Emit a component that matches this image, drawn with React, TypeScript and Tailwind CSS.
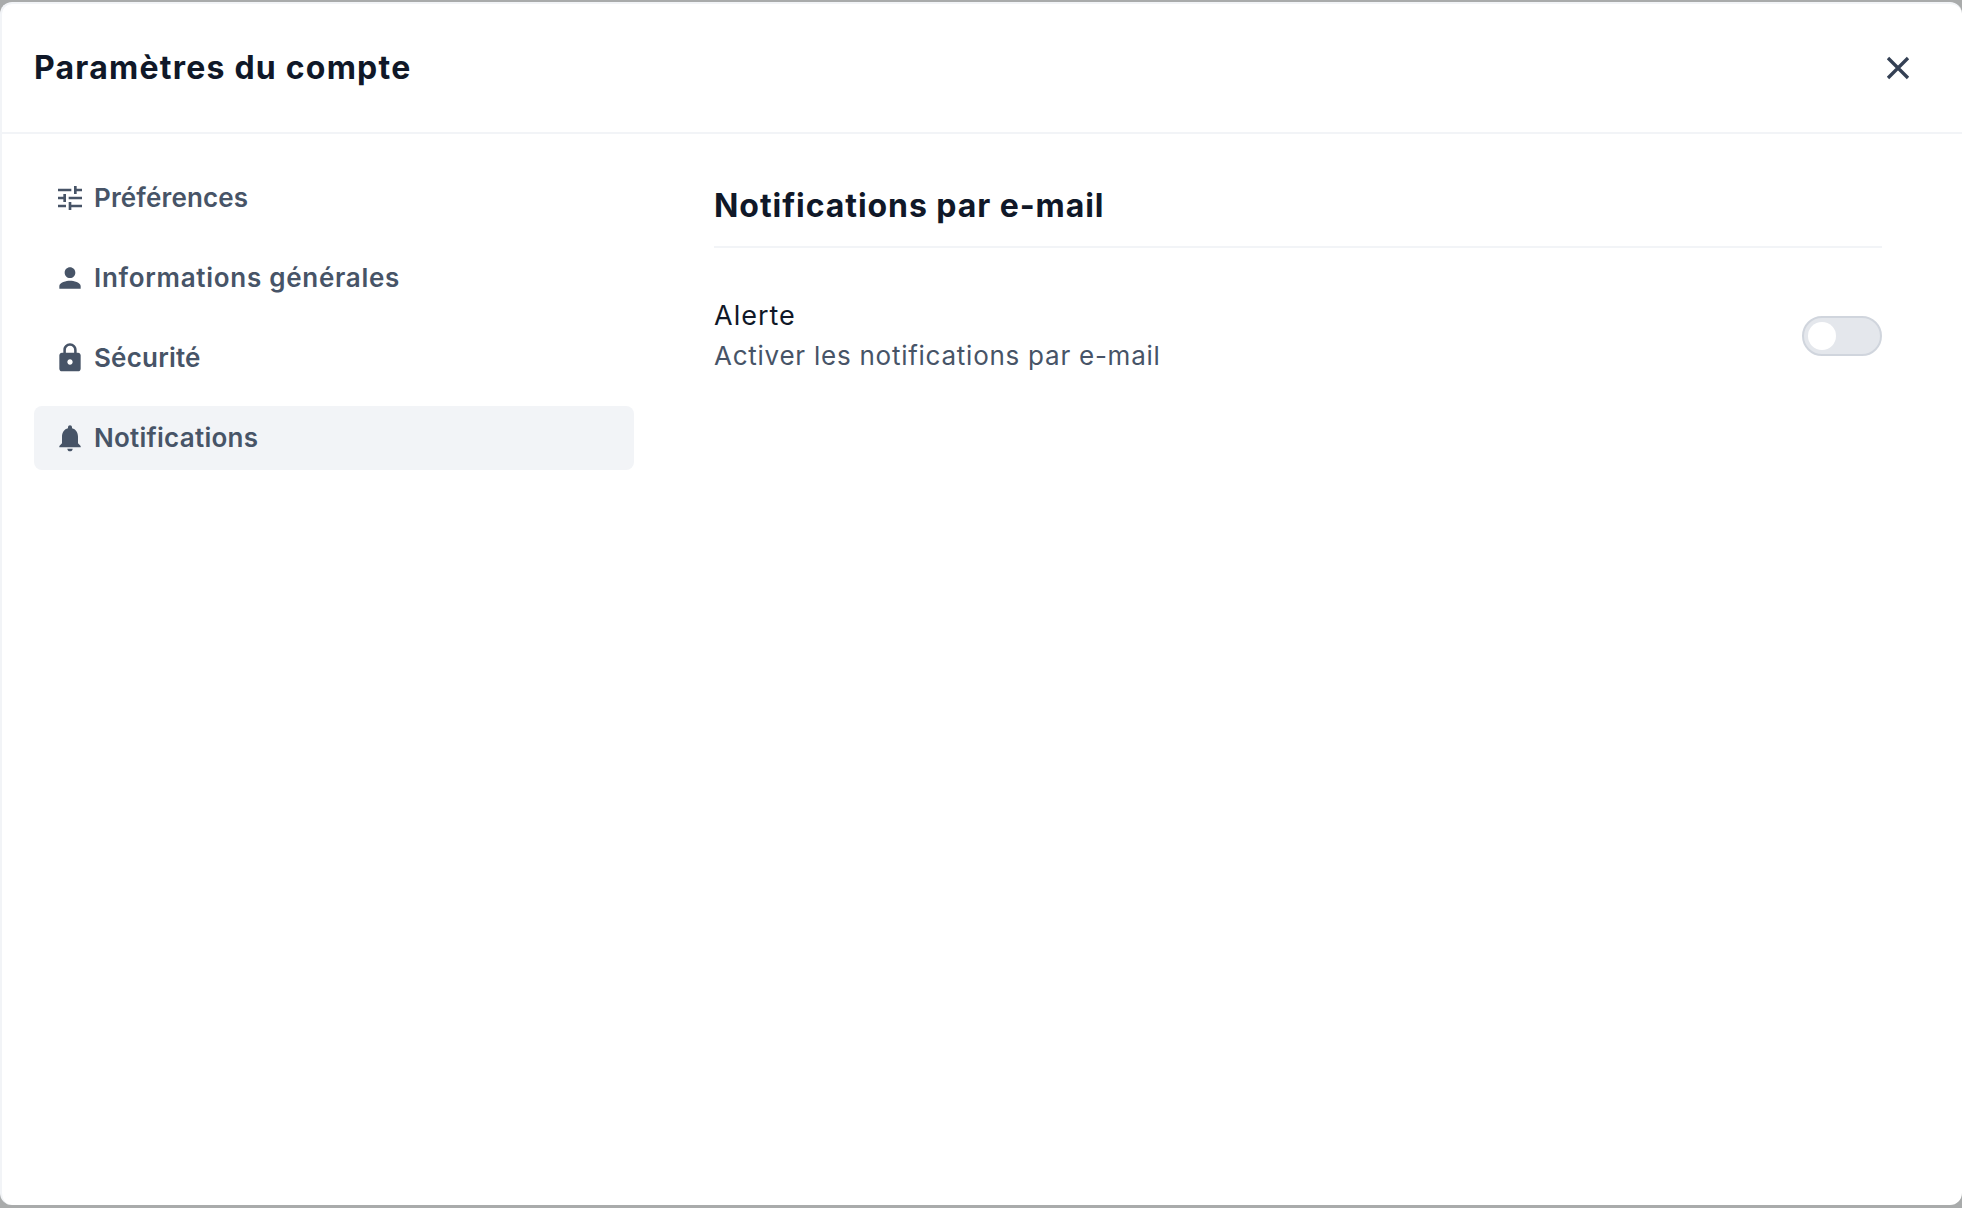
const iconPaths = {
  tune: "M3 17v2h6v-2H3zM3 5v2h10V5H3zm10 16v-2h8v-2h-8v-2h-2v6h2zM7 9v2H3v2h4v2h2V9H7zm14 4v-2H11v2h10zm-6-4h2V7h4V5h-4V3h-2v6z",
  person: "M12 12c2.21 0 4-1.79 4-4s-1.79-4-4-4-4 1.79-4 4 1.79 4 4 4zm0 2c-2.67 0-8 1.34-8 4v2h16v-2c0-2.66-5.33-4-8-4z",
  lock: "M18 8h-1V6c0-2.76-2.24-5-5-5S7 3.24 7 6v2H6c-1.1 0-2 .9-2 2v10c0 1.1.9 2 2 2h12c1.1 0 2-.9 2-2V10c0-1.1-.9-2-2-2zm-6 9c-1.1 0-2-.9-2-2s.9-2 2-2 2 .9 2 2-.9 2-2 2zm3.1-9H8.9V6c0-1.71 1.39-3.1 3.1-3.1 1.71 0 3.1 1.39 3.1 3.1v2z",
  bell: "M12 22c1.1 0 2-.9 2-2h-4c0 1.1.89 2 2 2zm6-6v-5c0-3.07-1.64-5.64-4.5-6.32V4c0-.83-.67-1.5-1.5-1.5s-1.5.67-1.5 1.5v.68C7.63 5.36 6 7.92 6 11v5l-2 2v1h16v-1l-2-2z",
};

const items = [
  { label: "Préférences", icon: iconPaths.tune, active: false, track: "tracking-[0.15px]" },
  { label: "Informations générales", icon: iconPaths.person, active: false, track: "tracking-[0.72px]" },
  { label: "Sécurité", icon: iconPaths.lock, active: false, track: "tracking-[0.2px]" },
  { label: "Notifications", icon: iconPaths.bell, active: true, track: "tracking-[0.25px]" },
];

export default function App() {
  return (
    <div className="h-[1208px] bg-[#a9abab] pt-[2px] pb-[3px] font-['Inter',sans-serif]">
      <div className="h-full flex flex-col rounded-xl bg-white border-2 border-b-0 border-r-0 border-[#f2f4f7] overflow-hidden">
        <header className="h-[130px] shrink-0 flex items-center justify-between pl-[32px] pr-[44px] border-b-2 border-[#f2f4f7]">
          <h1 className="text-[32px] leading-[40px] font-bold text-[#101828] tracking-[1.23px]">Paramètres du compte</h1>
          <button className="text-[#344054]">
            <svg width="40" height="40" viewBox="0 0 24 24" fill="none" stroke="currentColor" strokeWidth="2" strokeLinecap="butt">
              <path d="M6 6l12 12M18 6L6 18" />
            </svg>
          </button>
        </header>
        <div className="flex flex-1 pl-[32px] pr-[80px] pt-[32px] gap-[80px]">
          <nav className="w-[600px] shrink-0 flex flex-col gap-[16px]">
            {items.map((it) => (
              <div
                key={it.label}
                className={`h-[64px] flex items-center gap-[8px] px-[20px] rounded-lg ${it.active ? "bg-[#f2f4f7]" : ""}`}
              >
                <svg width="32" height="32" viewBox="0 0 24 24" className="shrink-0">
                  <path d={it.icon} fill="#475467" />
                </svg>
                <span className={`text-[26px] leading-[32px] font-semibold text-[#475467] ${it.track}`}>{it.label}</span>
              </div>
            ))}
          </nav>
          <main className="flex-1 min-w-0">
            <div className="pt-[16px] pb-[16px] border-b-2 border-[#f2f4f7]">
              <h2 className="text-[32px] leading-[48px] font-bold text-[#101828] tracking-[0.93px]">Notifications par e-mail</h2>
            </div>
            <div className="mt-[47px] flex items-center justify-between">
              <div>
                <div className="text-[27px] leading-[41px] text-[#101828] tracking-[1px]">Alerte</div>
                <div className="text-[26px] leading-[40px] text-[#475467] tracking-[0.75px]">Activer les notifications par e-mail</div>
              </div>
              <div className="w-[80px] h-[40px] rounded-full bg-[#e4e7ec] border-2 border-[#d0d5dd] flex items-center pl-[4px]">
                <div className="w-[28px] h-[28px] rounded-full bg-white" />
              </div>
            </div>
          </main>
        </div>
      </div>
    </div>
  );
}
